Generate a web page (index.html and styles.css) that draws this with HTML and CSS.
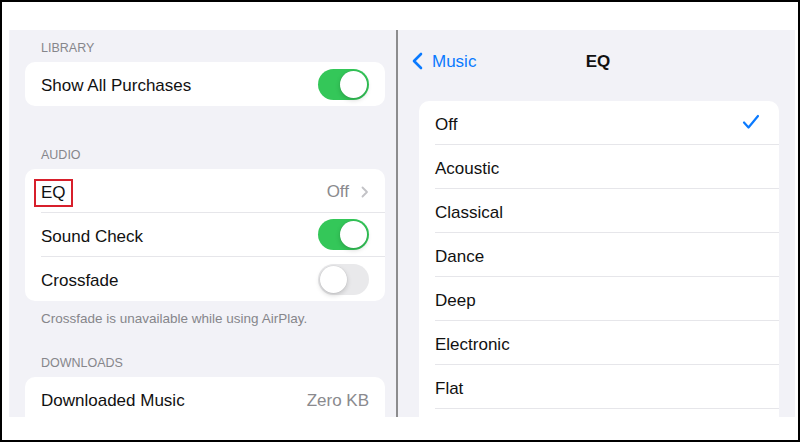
FILE: index.html
```html
<!DOCTYPE html>
<html lang="en">
<head>
  <meta charset="UTF-8" />
  <meta name="viewport" content="width=device-width, initial-scale=1.0"/>
  <title>Music Settings - EQ</title>
  <link rel="stylesheet" href="styles.css">
</head>
<body>
  <div class="frame">
    <div class="screen">

      <div class="pane pane-left">
        <div class="group-title first">Library</div>
        <div class="card">
          <div class="row"><div class="row-inner">
            <span class="label">Show All Purchases</span>
            <span class="switch on"></span>
          </div></div>
        </div>

        <div class="group-title">Audio</div>
        <div class="card">
          <div class="row"><div class="row-inner">
            <span class="label"><span class="mark">EQ</span></span>
            <span class="detail">Off
              <svg class="chev" width="8" height="12" viewBox="0 0 8 12"><path d="M1.5 1.5 L6 6 L1.5 10.5" fill="none" stroke="#c2c2c6" stroke-width="1.8" stroke-linecap="round" stroke-linejoin="round"/></svg>
            </span>
          </div></div>
          <div class="row"><div class="row-inner">
            <span class="label">Sound Check</span>
            <span class="switch on"></span>
          </div></div>
          <div class="row"><div class="row-inner">
            <span class="label">Crossfade</span>
            <span class="switch"></span>
          </div></div>
        </div>
        <div class="group-note">Crossfade is unavailable while using AirPlay.</div>

        <div class="group-title after-note">Downloads</div>
        <div class="card card-cut">
          <div class="row"><div class="row-inner">
            <span class="label">Downloaded Music</span>
            <span class="detail">Zero KB</span>
          </div></div>
        </div>
      </div>

      <div class="divider"></div>

      <div class="pane pane-right">
        <div class="navbar">
          <a class="back">
            <svg width="12" height="18" viewBox="0 0 12 18"><path d="M10 2 L3 9 L10 16" fill="none" stroke="#0a7aff" stroke-width="2.6" stroke-linecap="round" stroke-linejoin="round"/></svg>
            Music
          </a>
          <div class="nav-title">EQ</div>
          <div></div>
        </div>

        <div class="card card-cut">
          <div class="row"><div class="row-inner">
            <span class="label">Off</span>
            <svg class="check" width="18" height="16" viewBox="0 0 18 16"><path d="M2 8.5 L6.5 13.5 L16 2" fill="none" stroke="#0a7aff" stroke-width="2.2" stroke-linecap="round" stroke-linejoin="round"/></svg>
          </div></div>
          <div class="row"><div class="row-inner"><span class="label">Acoustic</span></div></div>
          <div class="row"><div class="row-inner"><span class="label">Classical</span></div></div>
          <div class="row"><div class="row-inner"><span class="label">Dance</span></div></div>
          <div class="row"><div class="row-inner"><span class="label">Deep</span></div></div>
          <div class="row"><div class="row-inner"><span class="label">Electronic</span></div></div>
          <div class="row more"><div class="row-inner"><span class="label">Flat</span></div></div>
        </div>
      </div>

    </div>
  </div>
</body>
</html>
```

FILE: styles.css
```css
body {
  margin: 0;
  background: #fff;
  font-family: "Liberation Sans", Arial, sans-serif;
  color: #111;
}
.frame {
  width: 800px;
  height: 442px;
  box-sizing: border-box;
  border: 2px solid #000;
  padding: 28px 3px 23px 7px;
  background: #fff;
}
.screen {
  display: flex;
  height: 100%;
}
.pane {
  background: #f2f2f7;
  overflow: hidden;
}
.pane-left {
  width: 387px;
  box-sizing: border-box;
  padding: 9px 11px 0 16px;
}
.divider {
  width: 2px;
  background: #8c8c8e;
}
.pane-right {
  flex: 1;
}

/* groups */
.group-title {
  margin-top: 40px;
  padding: 1px 16px 6px;
  font-size: 12.5px;
  line-height: 16px;
  text-transform: uppercase;
  color: #86868b;
}
.group-title.first {
  margin-top: 0;
}
.group-title.after-note {
  margin-top: 27px;
}
.group-note {
  padding: 10px 16px 0;
  font-size: 13.5px;
  line-height: 16px;
  color: #86868b;
}
.card {
  background: #fff;
  border-radius: 10px;
  overflow: hidden;
}
/* list continues below the visible area */
.card-cut {
  padding-bottom: 24px;
}
.row {
  padding-left: 16px;
}
.row-inner {
  height: 44px;
  box-sizing: border-box;
  display: flex;
  align-items: center;
  justify-content: space-between;
  padding-right: 16px;
  border-bottom: 1px solid #e6e6ea;
}
.row:last-child .row-inner {
  border-bottom: none;
}
.row.more .row-inner {
  border-bottom: 1px solid #e6e6ea;
}
.label {
  padding-top: 4px;
  font-size: 17px;
  line-height: 20px;
}
.detail {
  display: flex;
  align-items: center;
  gap: 12px;
  padding-top: 3px;
  font-size: 17px;
  color: #8a8a8e;
}
.mark {
  display: inline-block;
  margin-left: -7px;
  padding: 2px 5px;
  border: 2px solid #d71f2b;
}

/* switches */
.switch {
  width: 51px;
  height: 31px;
  box-sizing: border-box;
  padding: 2px;
  border-radius: 16px;
  background: #e9e9eb;
  display: flex;
  justify-content: flex-start;
}
.switch.on {
  background: #34c759;
  justify-content: flex-end;
}
.switch::after {
  content: "";
  width: 27px;
  height: 27px;
  border-radius: 50%;
  background: #fff;
  box-shadow: 0 2px 5px rgba(0, 0, 0, 0.18), 0 0 0 0.5px rgba(0, 0, 0, 0.05);
}

/* nav */
.navbar {
  height: 62px;
  display: grid;
  grid-template-columns: 1fr auto 1fr;
  align-items: center;
}
.back {
  display: flex;
  align-items: center;
  gap: 9px;
  margin-left: 13px;
  padding-top: 2px;
  font-size: 17px;
  color: #0a7aff;
}
.back svg {
  margin-top: -2px;
}
.nav-title {
  padding-top: 2px;
  padding-left: 3px;
  font-size: 17px;
  font-weight: bold;
}
.pane-right .card {
  margin: 9px 16px 0 21px;
}
.check {
  margin-right: 3px;
  margin-top: -2px;
}
```
